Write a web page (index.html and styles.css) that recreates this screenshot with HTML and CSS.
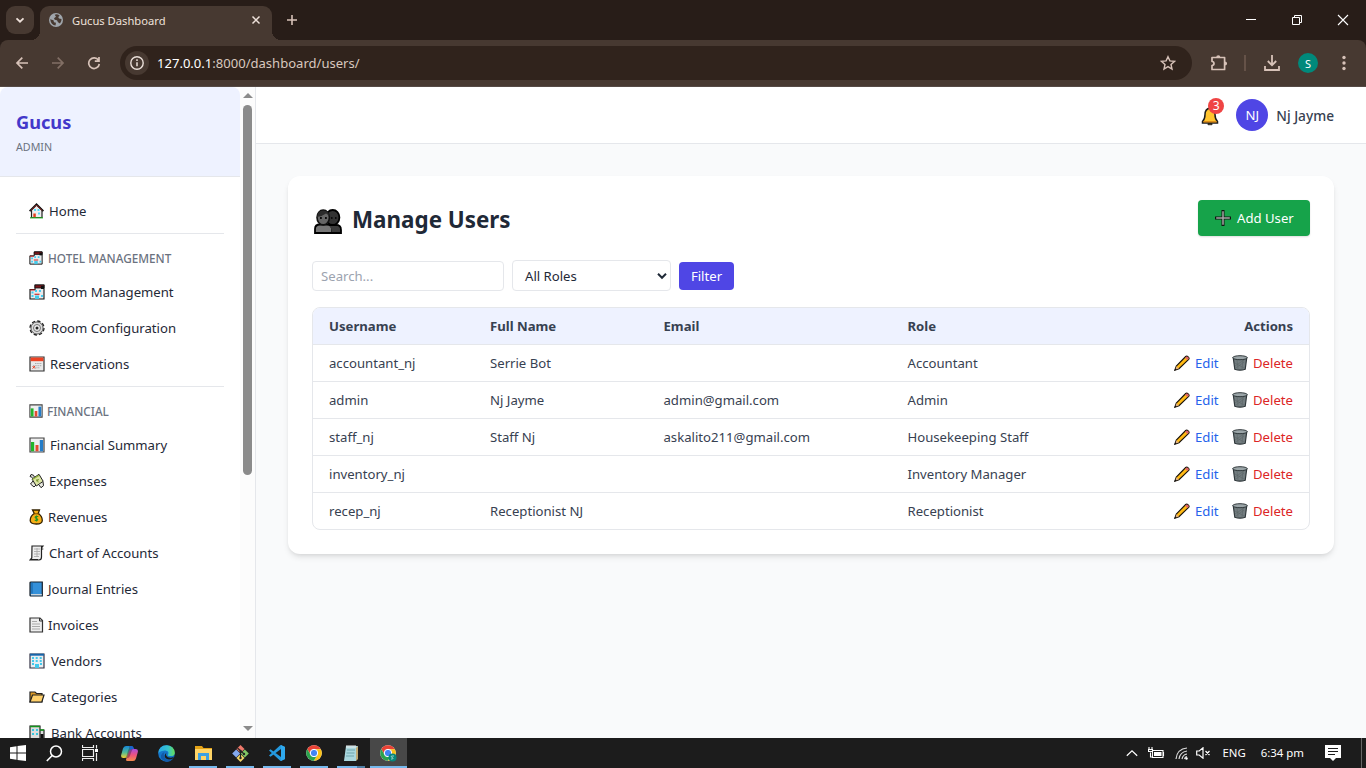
FILE: index.html
```html
<!DOCTYPE html>
<html lang="en">
<head>
<meta charset="utf-8">
<title>Gucus Dashboard</title>
<link rel="stylesheet" href="styles.css">
</head>
<body>
<svg class="defs" aria-hidden="true">
  <symbol id="home" viewBox="0 0 16 16"><path d="M2.500 7v7.500h10.500V7L7.500 2z" fill="#eee" stroke="#222" stroke-width="1.200"/><path d="M.6 8.200 7.500 1.300l6.900 6.900" fill="none" stroke="#111" stroke-width="1.800"/><path d="M2 7.500 7.500 2 13 7.500" fill="none" stroke="#c33a32" stroke-width=".8"/><path d="M5 6h2v2H5zM8.500 6h2v2h-2zM9 9.500h2v2H9z" fill="#55d7f5"/><path d="M4.300 10.500h2.500v4H4.300z" fill="#e5401f"/><path d="M1 14.800h13" stroke="#24a524" stroke-width="1.200"/></symbol>
  <symbol id="hotel" viewBox="0 0 16 16"><path d="M1 5.500h5V1h9v14H1z" fill="#e9eaec" stroke="#111" stroke-width="1.100"/><path d="M6 1h9v3H6z" fill="#7c1519" stroke="#111" stroke-width=".8"/><path d="M12 2h3v3h-3z" fill="#111"/><path d="M1 6h5" stroke="#c22" stroke-width="1"/><path d="M2.500 7.500h2v2h-2zM6 6h2v2H6zM10 6h2v2h-2zM2.500 11h2v2h-2zM12 11h2v2h-2z" fill="#45cff2"/><path d="M5.500 10.300h5" stroke="#d22d2d" stroke-width="1.200"/><path d="M6 11.500h4V15H6z" fill="#44c9e8"/></symbol>
  <symbol id="gear" viewBox="0 0 16 16"><circle cx="8" cy="8" r="7" fill="#ddd" stroke="#222" stroke-width="1.300" stroke-dasharray="3.300 2.200"/><circle cx="8" cy="8" r="6" fill="#dcdcdc" stroke="#444" stroke-width=".8"/><circle cx="8" cy="8" r="3.500" fill="#eee" stroke="#777" stroke-width="1"/><circle cx="8" cy="8" r="1.500" fill="#222"/></symbol>
  <symbol id="calendar" viewBox="0 0 16 16"><path d="M1 1h14v14H1z" fill="#e9e9e9" stroke="#333" stroke-width="1.200"/><path d="M1.600 1.500h12.800v3.700H1.600z" fill="#ed4223"/><path d="M6 7.500h7M4 9.700h9M4 11.800h7" stroke="#aaa" stroke-width="1" stroke-dasharray="1.500 .7"/><path d="m3.500 10 2.500 2.500m0-2.500-2.500 2.500" stroke="#ed4223" stroke-width="1"/></symbol>
  <symbol id="chart" viewBox="0 0 16 16"><path d="M1 1h14v14H1z" fill="#efefef" stroke="#444" stroke-width="1.200"/><path d="M2 5h3.200v9.300H2z" fill="#22b52a"/><path d="M6.500 8h3v6.300h-3z" fill="#e34b32"/><path d="M10.800 3H14v11.300h-3.200z" fill="#247dc9"/></symbol>
  <symbol id="money" viewBox="0 0 16 16"><path d="M3.500 4.500 1 3.500l1-2 2.500.7 1 2M10 12l2 2.700 2.500-2-.5-4M4 8l-2.500 3 3.500 3 2-2" fill="#e8e8e0" stroke="#222"/><path d="m3 6 7-4.700 4.200 7L7.300 13z" fill="#dce5a5" stroke="#222"/><path d="m3.500 6.500 6.300-4" stroke="#93b33c" stroke-width="1.200"/><path d="m7 8 3-1.500M7.800 6l1.400 3.300" stroke="#76952c"/></symbol>
  <symbol id="bag" viewBox="0 0 16 16"><path d="M3.500 1h7L9.200 4.500Q13.300 7 13.300 11.500 13.300 15 7.300 15T1.200 11.500Q1.200 7 5.300 4.500z" fill="#f6ae16" stroke="#332200" stroke-width="1.300"/><path d="M4.500 4.800h6" stroke="#7b4e00"/><path d="M9.300 7.500H6.800q-1.500 1 .7 1.900 2.200.9.400 2H5.700M7.500 6.500v6" stroke="#29941f" fill="none" stroke-width="1.200"/></symbol>
  <symbol id="scroll" viewBox="0 0 16 16"><path d="M3 1h11l-1.500 2v9q0 3-2.500 3H1l1.800-2z" fill="#eee" stroke="#222" stroke-width="1.200"/><path d="M5 4h6M5 6.500h6M5 9h6M5 11.500h5M8 3v9" stroke="#aaa" stroke-width=".9"/><path d="M12.500 1v3h1.800M1 14.500h8" fill="none" stroke="#222"/></symbol>
  <symbol id="book" viewBox="0 0 16 16"><path d="M1 2q0-1 1-1h11.300v14H2q-1 0-1-1z" fill="#3490d9" stroke="#17202a" stroke-width="1.200"/><path d="M3 1.500v11" stroke="#1668ae" stroke-width="1.200"/><path d="M2 13.700h10.800" stroke="#ddd" stroke-width="1.200"/></symbol>
  <symbol id="page" viewBox="0 0 16 16"><path d="M1 1h10l2.500 2.500V15H1z" fill="#eee" stroke="#333" stroke-width="1.200"/><path d="M3 4.500h5M3 7h8M3 9.500h8M3 12h8" stroke="#aaa"/><path d="M10.500 1v3H13" stroke="#333" fill="none"/></symbol>
  <symbol id="office" viewBox="0 0 16 16"><path d="M1 1h14v14H1z" fill="#e8edf1" stroke="#334" stroke-width="1.200"/><path d="M1 1.700h14" stroke="#1765ab" stroke-width="2"/><path d="M3 4h2v2H3zm3.700 0h2v2h-2zm4 0h2v2h-2zM3 7h2v2H3zm3.700 0h2v2h-2zm4 0h2v2h-2zM3 10h2v2H3zm8 0h2v2h-2zM6 11h4v4H6z" fill="#43c9ec"/></symbol>
  <symbol id="folder" viewBox="0 0 16 16"><path d="M1 3h5l1.500 1.500H13V13H1z" fill="#dc9a26" stroke="#222" stroke-width="1.200"/><path d="m1 13 2.500-7H15l-2.200 7z" fill="#ffd06a" stroke="#222" stroke-width="1.200"/></symbol>
  <symbol id="bank" viewBox="0 0 16 16"><path d="M1 1h10v14H1zM11 5h4v10h-4z" fill="#ddd" stroke="#222" stroke-width="1.200"/><path d="M1 1.500h10M11 5h4" stroke="#14931d" stroke-width="1.500"/><path d="M3 4h2v2H3zm4 0h2v2H7zM3 8h2v2H3zm4 0h2v2H7z" fill="#39c7df"/><path d="M11.500 9h3v4h-3z" fill="#111"/></symbol>
  <symbol id="pencil" viewBox="0 0 16 16"><path d="m.8 15.200 1.500-4.200L11.700 1.500q1-1 2.500.3t.5 2.500L5 13.700z" fill="#ffb914" stroke="#18120c" stroke-width="1.100"/><path d="m11.200 2.800 2.200 2.200 1-1q.7-1-.4-2t-1.800-.2z" fill="#e0626b"/><path d="m1.200 14.800 1.300-3.500 2.200 2.200z" fill="#e0b184"/><path d="m.5 15.500.8-2.300 1.500 1.500z" fill="#111"/></symbol>
  <symbol id="trash" viewBox="0 0 16 16"><path d="m1.300 3 1.500 11.300q5.200 1.800 10.400 0L14.700 3z" fill="#737d80" stroke="#30383b" stroke-width="1.200"/><path d="m5 5 1 9m5-9-1 9M3 8l9 5m-8 0 8-6M3 11l9-6" stroke="#5a6467" stroke-width=".6"/><ellipse cx="8" cy="2.700" rx="7.300" ry="2" fill="#9ba5a8" stroke="#30383b"/></symbol>
  <symbol id="chrome" viewBox="0 0 16 16"><circle cx="8" cy="8" r="7.800" fill="#fff"/><path d="M1.250 4.100A7.800 7.800 0 0 1 14.800 4.200H8A3.800 3.800 0 0 0 4.700 9.900z" fill="#e94235"/><path d="M14.800 4.200A7.800 7.800 0 0 1 7.900 15.800l3.400-5.900A3.800 3.800 0 0 0 8 4.200z" fill="#fbc116"/><path d="M7.900 15.800A7.800 7.800 0 0 1 1.250 4.100l3.450 5.800A3.800 3.800 0 0 0 11.300 9.900z" fill="#2ba24c"/><circle cx="8" cy="8" r="3.700" fill="#4285f4" stroke="#fff"/></symbol>
</svg>

<div class="screen">
  <div class="titlebar">
    <div class="tab-search"><svg width="12" height="12" viewBox="0 0 12 12"><path d="m2.500 4.300 3.500 3.400 3.500-3.400" fill="none" stroke="#eee1da" stroke-width="1.800"/></svg></div>
    <div class="tab">
      <svg width="14" height="14" viewBox="0 0 14 14"><circle cx="7" cy="7" r="7" fill="#a0a6ac"/><path d="M1.200 6.200 4.500 7.200 5 9.300l2 .5-.5 2.800Q2 12.200 1.200 6.200zM5.700 1.700q2.700-1 5 1L9.200 4l.8 1.500L12.500 6q.3 2.500-1.500 4.500L9 9.200 8 7.300 5.700 6.700 5 5.200l2-1.400z" fill="#473931"/></svg>
      <span class="tab-title">Gucus Dashboard</span>
      <svg width="10" height="10" viewBox="0 0 10 10"><path d="m1.500 1.500 7 7m0-7-7 7" stroke="#eee1da" stroke-width="1.500"/></svg>
    </div>
    <svg class="new-tab" width="12" height="12" viewBox="0 0 12 12"><path d="M6 1v10M1 6h10" stroke="#d7c2b8" stroke-width="1.600"/></svg>
    <div class="window-buttons">
      <svg width="12" height="12" viewBox="0 0 12 12"><path d="M1 5.500h10" stroke="#fff"/></svg>
      <svg width="12" height="12" viewBox="0 0 12 12"><path d="M1.500 3.500h7v7h-7zM3.500 3.500v-2h7v7h-2" fill="none" stroke="#fff"/></svg>
      <svg width="12" height="12" viewBox="0 0 12 12"><path d="m1 1 10 10M11 1 1 11" stroke="#fff" stroke-width="1.100"/></svg>
    </div>
  </div>
  <div class="toolbar-wrap"><div class="toolbar">
    <div class="nav-buttons">
      <svg width="14" height="14" viewBox="0 0 14 14"><path d="M13 7H2m5.300-5.300L2 7l5.300 5.300" fill="none" stroke="#d7c2b8" stroke-width="1.700"/></svg>
      <svg width="14" height="14" viewBox="0 0 14 14"><path d="M1 7h11M6.700 1.700 12 7l-5.300 5.300" fill="none" stroke="#826f65" stroke-width="1.700"/></svg>
      <svg width="14" height="14" viewBox="0 0 14 14"><path d="M11.500 4.300A5.300 5.300 0 1 0 12.300 8M12 1v4.200H7.800" fill="none" stroke="#d7c2b8" stroke-width="1.700"/></svg>
    </div>
    <div class="address">
      <span class="site-info"><svg width="16" height="16" viewBox="0 0 16 16"><circle cx="8" cy="8" r="6.200" fill="none" stroke="#eadfd9" stroke-width="1.400"/><path d="M8 7.200v4M8 4.300V6" stroke="#eadfd9" stroke-width="1.500"/></svg></span>
      <span class="url"><b>127.0.0.1</b>:8000/dashboard/users/</span>
      <svg class="star" width="16" height="16" viewBox="0 0 16 16"><path d="m8 1.700 1.900 4.200 4.500.5L11 9.500l1 4.500-4-2.400L4 14l1-4.500-3.400-3.100 4.500-.5z" fill="none" stroke="#d7c2b8" stroke-width="1.400"/></svg>
    </div>
    <div class="chrome-actions">
      <svg width="18" height="18" viewBox="0 0 18 18"><path d="M2 3.500h12.600v12H2v-4q2-.2 2-2t-2-2z" fill="none" stroke="#d7c2b8" stroke-width="1.700" stroke-linejoin="round"/><path d="M6.200 3.500a2.100 2.300 0 0 1 4.200 0zM14.800 7.400a2.300 2.100 0 0 1 0 4.200z" fill="#d7c2b8"/></svg>
      <i class="bar"></i>
      <svg width="16" height="16" viewBox="0 0 16 16"><path d="M8 0v10M3.800 6 8 10.200 12.200 6M1 11v4h14v-4" fill="none" stroke="#d7c2b8" stroke-width="1.800"/></svg>
      <span class="profile">S</span>
      <svg width="4" height="16" viewBox="0 0 4 16"><g fill="#d7c2b8"><circle cx="2" cy="2.500" r="1.700"/><circle cx="2" cy="8" r="1.700"/><circle cx="2" cy="13.500" r="1.700"/></g></svg>
    </div>
  </div></div>

  <div class="page">
    <aside class="sidebar">
      <div class="side-content">
        <div class="brand"><h2>Gucus</h2><p>ADMIN</p></div>
        <nav>
          <a><svg class="g4"><use href="#home"/></svg>Home</a>
          <hr>
          <h3><svg class="g5"><use href="#hotel"/></svg>HOTEL MANAGEMENT</h3>
          <a><svg class="g6"><use href="#hotel"/></svg>Room Management</a>
          <a><svg class="g6"><use href="#gear"/></svg>Room Configuration</a>
          <a><svg class="g5"><use href="#calendar"/></svg>Reservations</a>
          <hr>
          <h3><svg class="g4"><use href="#chart"/></svg>FINANCIAL</h3>
          <a><svg class="g5"><use href="#chart"/></svg>Financial Summary</a>
          <a><svg class="g4"><use href="#money"/></svg>Expenses</a>
          <a><svg class="g3"><use href="#bag"/></svg>Revenues</a>
          <a><svg class="g4"><use href="#scroll"/></svg>Chart of Accounts</a>
          <a><svg class="g3"><use href="#book"/></svg>Journal Entries</a>
          <a><svg class="g3"><use href="#page"/></svg>Invoices</a>
          <a><svg class="g6"><use href="#office"/></svg>Vendors</a>
          <a><svg class="g6"><use href="#folder"/></svg>Categories</a>
          <a><svg class="g6"><use href="#bank"/></svg>Bank Accounts</a>
        </nav>
      </div>
      <div class="scrollbar"><i class="up"></i><i class="thumb"></i><i class="down"></i></div>
    </aside>
    <main>
      <header>
        <div class="bell">
          <svg width="18" height="20" viewBox="0 0 18 20"><path d="M9 2Q4 3 4 8.500 4 13 1.500 15.500V17h15v-1.500Q14 13 14 8.500 14 3 9 2z" fill="#ffc42e" stroke="#1d1d1d" stroke-width="1.500"/><path d="M2.500 15.800h13" stroke="#d78213" stroke-width="1.300"/><path d="M7 17.500h4v1.200H7z" fill="#ffc42e" stroke="#222"/></svg>
          <span class="badge">3</span>
        </div>
        <span class="avatar">NJ</span><span class="user">Nj Jayme</span>
      </header>
      <section class="card">
        <div class="card-head">
          <svg class="people" width="28" height="25" viewBox="0 0 28 25"><path d="M14 24v-8h8q5 0 5 5v3z" fill="#3b3b3b" stroke="#000" stroke-width="1.800"/><ellipse cx="18.700" cy="8.500" rx="6.700" ry="7.500" fill="#333" stroke="#000" stroke-width="1.800"/><path d="M1 24v-4q0-4.500 5-4.500h7q5 0 5 4.500v4z" fill="#777" stroke="#000" stroke-width="1.800"/><path d="M16 18q1.500 1 1.500 5H26v-2q0-4-4-4h-6z" fill="#3b3b3b"/><ellipse cx="9.200" cy="8.500" rx="6.200" ry="7.400" fill="#666" stroke="#111" stroke-width="1.600"/><path d="M3 8Q3.500 1.500 9.500 1.500q5 .3 5.500 5L12 4.500Q8 7.500 3 8z" fill="#2b2b2b"/><path d="M6 9h1.800m3.200 0h1.800M17 9h1.500m2.500 0h1.500" stroke="#0b0b0b" stroke-width="1.800"/></svg>
          <h1>Manage Users</h1>
          <button class="add"><svg width="16" height="16" viewBox="0 0 16 16"><path d="M6.500 0h3v6.500H16v3H9.500V16h-3V9.500H0v-3h6.500z" fill="#111"/><path d="M8 1.200v13.600M1.200 8h13.600" stroke="#a5a5a5" stroke-width="1.500"/></svg>Add User</button>
        </div>
        <div class="filters">
          <input placeholder="Search...">
          <div class="select">All Roles<svg width="10" height="8" viewBox="0 0 10 8"><path d="m1 1.800 4 4 4-4" fill="none" stroke="#1f2937" stroke-width="2"/></svg></div>
          <button class="filter">Filter</button>
        </div>
        <div class="table">
          <div class="row head"><span>Username</span><span>Full Name</span><span>Email</span><span>Role</span><span class="right">Actions</span></div>
          <div class="row"><span>accountant_nj</span><span>Serrie Bot</span><span></span><span>Accountant</span><span class="actions"><svg><use href="#pencil"/></svg><a class="edit">Edit</a><svg><use href="#trash"/></svg><a class="delete">Delete</a></span></div>
          <div class="row"><span>admin</span><span>Nj Jayme</span><span>admin@gmail.com</span><span>Admin</span><span class="actions"><svg><use href="#pencil"/></svg><a class="edit">Edit</a><svg><use href="#trash"/></svg><a class="delete">Delete</a></span></div>
          <div class="row"><span>staff_nj</span><span>Staff Nj</span><span>askalito211@gmail.com</span><span>Housekeeping Staff</span><span class="actions"><svg><use href="#pencil"/></svg><a class="edit">Edit</a><svg><use href="#trash"/></svg><a class="delete">Delete</a></span></div>
          <div class="row"><span>inventory_nj</span><span></span><span></span><span>Inventory Manager</span><span class="actions"><svg><use href="#pencil"/></svg><a class="edit">Edit</a><svg><use href="#trash"/></svg><a class="delete">Delete</a></span></div>
          <div class="row"><span>recep_nj</span><span>Receptionist NJ</span><span></span><span>Receptionist</span><span class="actions"><svg><use href="#pencil"/></svg><a class="edit">Edit</a><svg><use href="#trash"/></svg><a class="delete">Delete</a></span></div>
        </div>
      </section>
    </main>
  </div>

  <footer class="taskbar">
    <span class="task"><svg width="16" height="16" viewBox="0 0 16 16"><path d="M0 2.200 6.500 1.200V7.500H0zM7.500 1 16 0v7.500H7.500zM0 8.500h6.500v6.300L0 13.800zM7.500 8.500H16V16l-8.500-1z" fill="#fff"/></svg></span>
    <span class="task"><svg width="17" height="17" viewBox="0 0 17 17"><circle cx="10" cy="6.500" r="5.500" fill="none" stroke="#fff" stroke-width="1.500"/><path d="M6.200 10.500.8 16" stroke="#fff" stroke-width="1.600"/></svg></span>
    <span class="task"><svg width="17" height="16" viewBox="0 0 17 16"><path d="M.5 0v2.500h11V0M.5 16v-2.500h11V16M.5 4.500h11v7H.5zM14.500 0v3.500M14.500 8v8" fill="none" stroke="#eee" stroke-width="1.200"/><path d="M13 4h3v3h-3z" fill="#fff"/></svg></span>
    <span class="task first-app"><svg width="17" height="15" viewBox="0 0 17 15"><defs><linearGradient id="cpl" x2="0" y2="1"><stop stop-color="#1689d9"/><stop offset=".55" stop-color="#54b994"/><stop offset="1" stop-color="#f4cf31"/></linearGradient><linearGradient id="cpr" x2="0" y2="1"><stop stop-color="#a94be0"/><stop offset=".5" stop-color="#ed537d"/><stop offset="1" stop-color="#f58b4c"/></linearGradient></defs><path d="M5 0h5.500q2 0 1.300 2L9 9.500Q8.200 12 6.500 12H2.300q-3 0-2-3.500L2 2.500Q2.700 0 5 0z" fill="url(#cpl)"/><path d="M11 3h3.700q3 0 2 3.500L15 12.500q-.7 2.500-3 2.500H6.500q-2 0-1.300-2L8 5.500Q8.800 3 11 3z" fill="url(#cpr)"/><path d="M7 4.500 5.500 10q-.8 2-2.500 2h3.500q1.700 0 2.500-2.500L11 4.200q.6-1.200 1.500-1.200h1Q13 0 10.500 0H8.300Q9 2 7 4.500z" fill="#1c1c1c" opacity=".35"/><path d="M8.500 0h2q2 0 2.800 3H11q-1 0-1.700 1z" fill="#1b63cf"/></svg></span>
    <span class="task"><svg width="17" height="17" viewBox="0 0 17 17"><defs><linearGradient id="ed"><stop stop-color="#28a8e8"/><stop offset=".6" stop-color="#36c4cd"/><stop offset="1" stop-color="#67df54"/></linearGradient></defs><circle cx="8.500" cy="8.500" r="8.300" fill="#1476cb"/><path d="M.3 8Q1 0 9 .2q7 .6 7.800 7.200 0 4-4.800 3.700-3.300-.2-1.700-2.200Q11 6 7.500 5.500 3 5.200.3 8z" fill="url(#ed)"/><path d="M6.500 7Q4.500 11 8 14q3 2 7-.7-2 3.500-6 3.600Q2 15 3 10.500 4 7.500 6.500 7z" fill="#125aa9"/><path d="M8.500 7.500q-1.500 3 1.500 4.700 3 1.200 6-.8l-1 2q-4 2.200-7 .2-3-2.600.5-6.100z" fill="#1c1c1c"/></svg></span>
    <span class="task open"><svg width="17" height="16" viewBox="0 0 17 16"><path d="M0 1h7l1.500 2H17v12H0z" fill="#e4a317"/><path d="M0 4h17v11H0z" fill="#ffd466"/><path d="M3 8h11v7H3z" fill="#3da0e2"/><path d="M6 11h5v4H6z" fill="#ffd466"/></svg></span>
    <span class="task open"><svg width="17" height="17" viewBox="0 0 17 17"><path d="m8.500 0 4 4-4 4-4-4z" fill="#ef796b"/><path d="m4.200 4.500 4 4-4 4-4-4z" fill="#84a9ee"/><path d="m12.800 4.500 4 4-4 4-4-4z" fill="#80c765"/><path d="m8.500 9 4 4-4 4-4-4z" fill="#f2d568"/><path d="m5.500 3 6 5.500m-3-2.500v7" stroke="#222" stroke-width="1.100"/><circle cx="8.500" cy="6" r="1.200" fill="#222"/><circle cx="12" cy="9" r="1.200" fill="#222"/><circle cx="8.500" cy="13" r="1.200" fill="#222"/></svg></span>
    <span class="task open"><svg width="16" height="16" viewBox="0 0 16 16"><path d="m11.500 0 4.500 2v12l-4.500 2L0 5.500l1.500-1.300L12 12V4L1.500 11.800 0 10.500z" fill="#2499df"/><path d="m12 0 4 2v12l-4 2z" fill="#2fa9ee"/></svg></span>
    <span class="task open"><svg width="16" height="16"><use href="#chrome"/></svg></span>
    <span class="task open stacked"><svg width="16" height="17" viewBox="0 0 16 17"><path d="M3 1h12l-2 15H1z" fill="#a9d7de"/><path d="m13 3 2-2v13l-2 2z" fill="#c0aa75"/><path d="M4 5h8M3.500 8h8M3 11h8" stroke="#6fa5ad"/><path d="M4 0v3m2-3v3m2-3v3m2-3v3m2-3v3" stroke="#eee"/></svg></span>
    <span class="task open current"><svg width="17" height="17" viewBox="0 0 17 17"><use href="#chrome" width="16" height="16"/><circle cx="12.500" cy="12.500" r="4" fill="#07877c"/><path d="M14 11h-2.500q-1 .8.500 1.400 2 .7.500 1.600H11" stroke="#bce1dc" fill="none" stroke-width=".8"/></svg></span>
    <div class="tray">
      <svg width="12" height="8" viewBox="0 0 12 8"><path d="m.8 6.800 5.200-5 5.200 5" fill="none" stroke="#fff" stroke-width="1.200"/></svg>
      <svg class="battery" width="17" height="13" viewBox="0 0 17 13"><path d="M4.500 3.500H15v7H4.500zM15.500 5v4M2.500 5.500V10h2M1 0v2m3-2v2M.5 2.500h4v2h-4z" fill="none" stroke="#fff" stroke-width="1.100"/><path d="M6 5h7.500v4H6z" fill="#fff"/></svg>
      <svg class="wifi" width="13" height="13" viewBox="0 0 13 13"><path d="M1 12Q2 2 12 1M4 12Q5 5 12 4M7 12q1-4.500 5-5M9.500 12q.5-2 2.500-2.300" fill="none" stroke="#ddd" stroke-width="1.200"/><circle cx="11.500" cy="11.500" r="1.200" fill="#fff"/></svg>
      <svg class="sound" width="15" height="12" viewBox="0 0 15 12"><path d="M.7 4h2.500L7 .8v10.400L3.200 8H.7zM9.500 4l4 4m0-4-4 4" fill="none" stroke="#fff" stroke-width="1.200"/></svg>
      <span class="lang">ENG</span><span class="clock">6:34 pm</span>
      <svg class="note" width="16" height="16" viewBox="0 0 16 16"><path d="M0 0h16v13h-5l-3 3-3-3H0z" fill="#fff"/><path d="M3 3.500h10M3 6.500h10M3 9.500h7" stroke="#1c1c1c" stroke-width="1.200"/></svg>
      <i class="peek"></i>
    </div>
  </footer>
</div>
</body>
</html>
```
FILE: styles.css
```css
* { box-sizing: border-box; }
body { margin: 0; font-family: "Noto Sans", "Open Sans", sans-serif; font-size: 13.15px; color: #1f2937; }
h1, h2, h3, p { margin: 0; }
svg { flex: none; display: block; }
.defs { width: 0; height: 0; position: absolute; }
.screen { width: 1366px; height: 768px; overflow: hidden; display: flex; flex-direction: column; }

.titlebar { height: 40px; flex: none; background: #281d18; display: flex; align-items: flex-end; padding-left: 6px; }
.tab-search { width: 28px; height: 28px; border-radius: 9px; background: #473931; display: grid; place-items: center; margin-bottom: 6px; }
.tab { position: relative; width: 232px; height: 34px; margin-left: 6px; border-radius: 9px 9px 0 0; background: #473931; display: flex; align-items: center; padding: 0 11px 6px 9px; color: #eee1da; font-size: 11.2px; }
.tab::before, .tab::after { content: ""; position: absolute; bottom: 0; width: 9px; height: 9px; }
.tab::before { left: -9px; background: radial-gradient(circle at 0 0, transparent 9px, #473931 9px); }
.tab::after { right: -9px; background: radial-gradient(circle at 100% 0, transparent 9px, #473931 9px); }
.tab-title { flex: 1; padding-left: 9px; }
.new-tab { margin: 0 0 14px 14px; }
.window-buttons { margin-left: auto; display: flex; gap: 34px; padding: 0 17px 14px 0; }
.toolbar-wrap { height: 47px; flex: none; background: #281d18; }
.toolbar { height: 47px; background: #473931; border-bottom: 1px solid #554a45; border-radius: 8px 8px 0 0; display: flex; align-items: center; }
.nav-buttons { display: flex; gap: 22px; width: 120px; padding-left: 15px; }
.address { width: 1072px; height: 34px; border-radius: 17px; background: #30231c; display: flex; align-items: center; padding: 0 16px 0 5px; }
.site-info { width: 24px; height: 24px; border-radius: 50%; background: #473931; display: grid; place-items: center; }
.url { flex: 1; padding-left: 8px; color: #d9c8bf; font-size: 13.05px; }
.url b { font-weight: 400; color: #fff; }
.chrome-actions { flex: 1; display: flex; align-items: center; padding-left: 18px; }
.bar { width: 2px; height: 16px; background: #655248; margin: 0 18px 0 16px; }
.profile { width: 20px; height: 20px; border-radius: 50%; background: #00897b; color: #fff; font-size: 11px; display: grid; place-items: center; margin: 0 24px 0 18px; }

.page { height: 651px; flex: none; display: flex; background: #f9fafb; }
.sidebar { width: 256px; border-right: 1px solid #e5e7eb; display: flex; background: #fff; }
.side-content { width: 240px; overflow: hidden; }
.brand { height: 90px; padding: 21px 16px 0; background: #eef2ff; border-bottom: 1px solid #e5e7eb; border-radius: 8px 8px 0 0; }
.brand h2 { color: #4338ca; font: 700 18.2px/28px "Noto Sans", sans-serif; }
.brand p { color: #6b7280; font-size: 10.7px; line-height: 16px; margin-top: 3px; }
nav { padding: 16px; }
nav a { height: 36px; display: flex; align-items: center; padding-left: 13px; }
nav hr { border: 0; border-top: 1px solid #e5e7eb; margin: 4px 0 12px; }
nav h3 { height: 24px; display: flex; align-items: center; padding-left: 13px; color: #6b7280; font-size: 11.75px; font-weight: 500; margin-bottom: 4px; }
nav svg { width: 16px; height: 16px; }
nav h3 svg { width: 14px; height: 14px; }
.g3 { margin-right: 3px; }
.g4 { margin-right: 4px; }
.g5 { margin-right: 5px; }
.g6 { margin-right: 6px; }
.scrollbar { width: 15px; background: #fcfcfc; display: flex; flex-direction: column; align-items: center; padding: 6px 0 7px; }
.up, .down { border: 5px solid transparent; border-top: 0; border-bottom: 5px solid #8b8b8b; }
.down { border-top: 5px solid #8b8b8b; border-bottom: 0; margin-top: auto; }
.thumb { width: 9px; height: 370px; margin-top: 7px; border-radius: 5px; background: #8b8b8b; }

main { flex: 1; }
header { height: 57px; background: #fff; border-bottom: 1px solid #e5e7eb; display: flex; align-items: center; justify-content: flex-end; padding-right: 32px; }
.bell { position: relative; margin: 2px 17px 0 0; }
.badge { position: absolute; left: 7px; top: -8px; width: 16px; height: 16px; border-radius: 50%; background: #ef4444; color: #fff; font-size: 12px; line-height: 16px; text-align: center; }
.avatar { width: 32px; height: 32px; border-radius: 50%; background: #4f46e5; color: #fff; display: grid; place-items: center; }
.user { margin-left: 8px; color: #374151; font-weight: 500; font-size: 13.7px; }
.card { margin: 32px; height: 378px; padding: 24px; border-radius: 12px; background: #fff; box-shadow: 0 4px 6px -1px #0000001a, 0 2px 4px -2px #0000001a; }
.card-head { height: 36px; display: flex; align-items: center; padding-left: 2px; }
.people { margin-top: 6px; }
.card-head h1 { margin: 4px 0 0 10px; font-size: 22.4px; line-height: 32px; font-weight: 700; }
button { border: 0; font: inherit; color: #fff; border-radius: 4px; }
.add { margin-left: auto; width: 112px; height: 36px; background: #16a34a; display: flex; align-items: center; gap: 6px; padding: 0 0 0 17px; box-shadow: 0 1px 2px #0002; white-space: nowrap; }
.filters { display: flex; align-items: center; gap: 8px; height: 32px; margin-top: 24px; }
.filters input, .select { border: 1px solid #e5e7eb; border-radius: 4px; height: 30px; font: inherit; background: #fff; }
.filters input { width: 192px; padding: 0 8px; }
.filters input::placeholder { color: #9ca3af; }
.select { width: 159px; height: 31px; margin-top: -1px; display: flex; align-items: center; justify-content: space-between; padding: 0 3px 0 12px; }
.filter { background: #4f46e5; width: 55px; height: 28px; padding: 0; }
.table { margin-top: 15px; height: 223px; border: 1px solid #e5e7eb; border-radius: 8px; overflow: hidden; }
.row { height: 37px; padding: 0 16px; display: grid; grid-template-columns: 161px 173.5px 244px 1fr 150px; align-items: center; border-bottom: 1px solid #e5e7eb; color: #374151; }
.head { background: #eef2ff; font-weight: 700; }
.row:last-child { border-bottom: 0; height: 36px; }
.right { text-align: right; }
.actions { display: flex; align-items: center; justify-content: flex-end; }
.actions svg { width: 16px; height: 16px; margin-right: 5px; }
.edit { color: #2563eb; margin-right: 13.5px; }
.delete { color: #dc2626; }

.taskbar { height: 30px; background: #1c1c1c; display: flex; color: #fff; }
.task { width: 36px; display: grid; place-items: center; }
.task:nth-child(n+4) { width: 37px; }
.first-app { margin-left: 2.5px; }
.open { background: linear-gradient(#76b9ed, #76b9ed) center bottom / 28px 2px no-repeat; }
.stacked { background: linear-gradient(90deg, #76b9ed 20px, #4f7fa5 20px) center bottom / 28px 2px no-repeat; }
.current { background: linear-gradient(#76b9ed, #76b9ed) center bottom / 37px 2px no-repeat #484848; }
.tray { margin-left: auto; display: flex; align-items: center; font-size: 11.4px; }
.lang, .clock { padding-bottom: 2px; }
.battery { margin-left: 10px; }
.wifi { margin-left: 10px; }
.sound { margin-left: 8px; }
.lang { margin-left: 11px; }
.clock { margin-left: 15px; }
.note { margin-left: 21px; }
.peek { width: 1px; height: 30px; background: #666; margin: 0 4px 0 20px; }
```
